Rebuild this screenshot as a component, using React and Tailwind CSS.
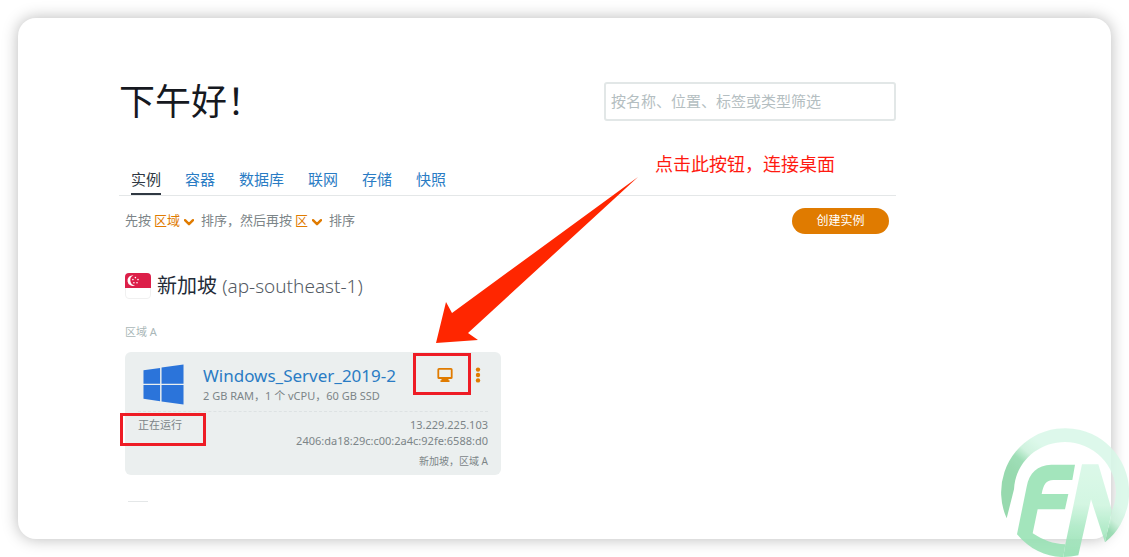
import React, { useState } from "react";

const TABS = ["实例", "容器", "数据库", "联网", "存储", "快照"];

function Chevron() {
  return (
    <svg viewBox="0 0 10 7" className="mt-0.5 h-[7px] w-[10px]" fill="none" stroke="#e07b00" strokeWidth="2.4">
      <path d="M1 1.2 5 5.2 9 1.2" strokeLinecap="round" strokeLinejoin="round" />
    </svg>
  );
}

function SingaporeFlag() {
  return (
    <svg viewBox="0 0 26 26" className="h-[26px] w-[26px] shrink-0">
      <rect x="0.5" y="0.5" width="25" height="25" rx="3.5" fill="#fff" stroke="#f0f0f0" />
      <path d="M0 15V4a4 4 0 0 1 4-4h18a4 4 0 0 1 4 4v11z" fill="#dc1f49" />
      <path d="M8.5 2.2a5.4 5.4 0 1 0 1.6 10.3A5.4 5.4 0 0 1 8.5 2.2z" fill="#fff" />
      <g fill="#fff">
        <circle cx="10.4" cy="4.6" r="0.8" />
        <circle cx="7.9" cy="6.6" r="0.8" />
        <circle cx="13" cy="6.6" r="0.8" />
        <circle cx="8.9" cy="9.8" r="0.8" />
        <circle cx="12" cy="9.8" r="0.8" />
      </g>
    </svg>
  );
}

function WindowsLogo() {
  return (
    <svg viewBox="0 0 42 42" className="h-[41px] w-[41px] shrink-0" fill="#2b74da">
      <path d="M0.5 6.5 17.5 4v16.2H0.5zM19 3.7 41.5 0.5V20.2H19zM0.5 21.6H17.5v16.5L0.5 35.5zM19 21.6h22.5v20L19 38.4z" />
    </svg>
  );
}

// Flecha roja que apunta al botón de conexión
function Arrow() {
  return (
    <svg
      viewBox="0 0 202 168"
      className="pointer-events-none absolute top-[9px] left-[317px] h-[168px] w-[202px]"
      fill="#ff2600"
    >
      <path d="M202 0 16 136 10 125 0 166 42 163 32 156z" />
    </svg>
  );
}

function Watermark() {
  return (
    <svg
      viewBox="0 0 417 411"
      className="pointer-events-none absolute right-0 bottom-0 h-[137px] w-[139px]"
    >
      <defs>
        <linearGradient id="ring" gradientUnits="userSpaceOnUse" x1="60" y1="160" x2="140" y2="60">
          <stop offset="0" stopColor="#86d3a1" />
          <stop offset="0.4" stopColor="#8fd9ab" />
          <stop offset="0.65" stopColor="#c9f1da" />
          <stop offset="1" stopColor="#d8f8e8" />
        </linearGradient>
        <linearGradient id="stem" gradientUnits="userSpaceOnUse" x1="290" y1="133" x2="275" y2="400">
          <stop offset="0" stopColor="#d6f8e6" />
          <stop offset="0.45" stopColor="#cdf5de" />
          <stop offset="0.7" stopColor="#a9e9c3" />
          <stop offset="1" stopColor="#8fdfae" />
        </linearGradient>
      </defs>
      <g opacity="0.86">
        <path
          d="M50 295A192 192 0 1 1 345 367L366 272A153 153 0 0 0 378 219 153 153 0 0 0 225 66C145 66 76 126 72 208z"
          fill="url(#ring)"
        />
        <path
          d="M255 134H184C142 136 118 158 110 200L81 343C120 390 172 412 220 411L226 373C190 372 158 360 128 340L143 268H225L235 222H155C160 194 168 181 190 180H247z"
          fill="#95e1b2"
        />
        <path d="M276 133H325L366 272 345 367 303 238 265 406Q243 411 220 411L226 373z" fill="url(#stem)" />
      </g>
    </svg>
  );
}

function InstanceCard() {
  return (
    <div className="relative mt-3 w-full max-w-[376px] rounded-md bg-[#ebefef] px-[13px] pt-3 pb-1.5 text-[#7c8588]">
      <div className="flex border-b border-dashed border-[#dde2e3] pb-1.5 pl-[5px]">
        <WindowsLogo />
        <div className="ml-[19px] min-w-0 flex-1">
          <a href="#instance" className="block text-[17px] leading-6 text-[#2a7cc4]">
            Windows_Server_2019-2
          </a>
          <p className="text-[11px] leading-4">2 GB RAM，1 个 vCPU，60 GB SSD</p>
        </div>
        <div className="flex items-start gap-[22px] pr-[7px]">
          <button type="button" aria-label="连接" className="mt-1">
            <svg viewBox="0 0 16 15" className="h-[15px] w-4" fill="#e07b00">
              <path
                fillRule="evenodd"
                d="M2 0h12a1.6 1.6 0 0 1 1.6 1.6v7.8A1.6 1.6 0 0 1 14 11h-2.5v1.2h1V14h-9v-1.8h1V11H2A1.6 1.6 0 0 1 .4 9.4V1.6A1.6 1.6 0 0 1 2 0zm.2 1.7v7.2h11.6V1.7z"
              />
            </svg>
          </button>
          <button type="button" aria-label="更多" className="mt-[3px]">
            <svg viewBox="0 0 6 16" className="h-4 w-1.5" fill="#e07b00">
              <circle cx="3" cy="2.6" r="2.2" />
              <circle cx="3" cy="8" r="2.2" />
              <circle cx="3" cy="13.4" r="2.2" />
            </svg>
          </button>
        </div>
      </div>
      <div className="flex justify-between pt-[5px] text-[11px] leading-4">
        <span>正在运行</span>
        <div className="text-right">
          <p>13.229.225.103</p>
          <p>2406:da18:29c:c00:2a4c:92fe:6588:d0</p>
          <p className="mt-1 text-[10px]">新加坡，区域 A</p>
        </div>
      </div>

      {/* Recuadros rojos */}
      <div className="pointer-events-none absolute top-[1px] left-[288px] h-[42px] w-[58px] border-3 border-[#ee1c25]" />
      <div className="pointer-events-none absolute top-[61px] left-[-5px] h-[33px] w-[86px] border-3 border-[#ee1c25]" />
    </div>
  );
}

export default function App() {
  const [tab, setTab] = useState("实例");
  const [query, setQuery] = useState("");

  return (
    <div className="relative bg-white p-[18px] font-['Noto_Sans','Noto_Sans_CJK_SC',sans-serif]">
      <main className="rounded-[18px] bg-white pt-16 pb-[37px] pl-[101px] shadow-[0_0_16px_rgba(0,0,0,0.28)]">
        <div className="max-w-[777px]">
          <header className="flex items-center justify-between">
            <h1 className="text-4xl leading-9 text-[#16191f]">下午好！</h1>
            <input
              type="search"
              aria-label="筛选"
              value={query}
              onChange={(e) => setQuery(e.target.value)}
              placeholder="按名称、位置、标签或类型筛选"
              className="h-[39px] w-[292px] rounded-[3px] border-2 border-[#e2e7e7] px-[5px] pb-0.5 text-[15px] outline-none placeholder:text-[#b4bec1]"
            />
          </header>

          <div className="relative mt-[47px]">
            <nav className="flex gap-6 border-b border-[#e4e7e8] pl-3 text-[15px] leading-[22px]">
              {TABS.map((t) => (
                <button
                  key={t}
                  type="button"
                  onClick={() => setTab(t)}
                  className={
                    t === tab
                      ? "border-b-2 border-[#2f3842] pb-[3px] text-[#2f3842]"
                      : "border-b-2 border-transparent pb-[3px] text-[#2a7cc4]"
                  }
                >
                  {t}
                </button>
              ))}
            </nav>

            <div className="flex items-center justify-between pt-3 pr-[7px] pl-1.5">
              <div className="flex items-center gap-[3px] text-[13px] text-[#7c8588]">
                <span>先按</span>
                <button type="button" className="flex items-center gap-1 text-[#e07b00]">
                  区域 <Chevron />
                </button>
                <span className="ml-1">排序，然后再按</span>
                <button type="button" className="flex items-center gap-1 text-[#e07b00]">
                  区 <Chevron />
                </button>
                <span className="ml-1">排序</span>
              </div>
              <button
                type="button"
                className="h-[26px] w-[97px] rounded-full bg-[#e07b00] text-xs text-white"
              >
                创建实例
              </button>
            </div>

            <section className="pl-1.5">
              <h2 className="mt-[38px] flex items-center gap-1.5 text-xl leading-7 text-[#232b37]">
                <SingaporeFlag />
                <span>
                  新加坡 <span className="text-[19px] font-light text-[#545b64]">(ap-southeast-1)</span>
                </span>
              </h2>
              <h3 className="mt-6 text-[11px] leading-4 text-[#aab7b8]">区域 A</h3>
              <InstanceCard />
              <div className="mt-[26px] ml-[3px] h-px w-5 bg-[#e4e7e8]" />
            </section>

            {/* Anotación */}
            <p className="pointer-events-none absolute top-[-18px] left-[536px] text-lg leading-7 whitespace-nowrap text-[#ff1a10]">
              点击此按钮，连接桌面
            </p>
            <Arrow />
          </div>
        </div>
      </main>
      <Watermark />
    </div>
  );
}
